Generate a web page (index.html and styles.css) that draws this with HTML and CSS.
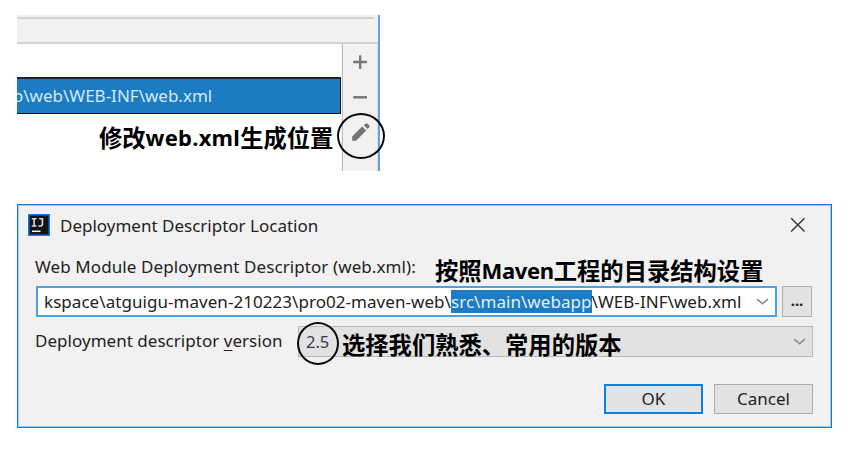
FILE: index.html
```html
<!DOCTYPE html>
<html lang="zh-CN">
<head>
<meta charset="utf-8">
<title>Deployment Descriptor Location</title>
<link rel="stylesheet" href="styles.css">
</head>
<body>
<section class="panel">
  <div class="panel-head"></div>
  <div class="panel-body">
    <div class="list">
      <div class="row"><span class="t-row">o\web\WEB-INF\web.xml</span></div>
    </div>
    <div class="tools">
      <svg class="tool plus" width="16" height="16" viewBox="0 0 16 16"><path d="M1.2 8H15M8.2 1.3V15" stroke="#777" stroke-width="2.3"/></svg>
      <svg class="tool minus" width="16" height="16" viewBox="0 0 16 16"><path d="M1.2 8.3H15" stroke="#777" stroke-width="2.5"/></svg>
      <svg class="tool pencil" width="20" height="20" viewBox="0 0 20 20"><path d="M1.2 18.8V14.4L11.2 4.5L15.2 8.5L5.1 18.8ZM12.8 3.2L14.4 1.7Q15.5 .8 16.6 1.7L18.2 3.2Q19 4.3 18.2 5.4L16.6 7Z" fill="#737373"/></svg>
    </div>
  </div>
  <div class="note note-a"><span>修改</span><span class="lat">web.xml</span><span>生成位置</span></div>
  <div class="ring ring-a"></div>
</section>
<section class="dialog">
  <header class="title">
    <svg class="logo" width="22" height="22" viewBox="0 0 22 22"><rect width="22" height="22" fill="#087cfa"/><rect x="1.5" y="1.5" width="19" height="19" fill="#111318"/><path d="M3.7 4.7H8.5M6.1 4.7V12M3.7 12H8.5M11.2 4.7H14.4V10Q14.4 12 12.4 12H10.4" fill="none" stroke="#ddd" stroke-width="1.6"/><path d="M4 17.3H12.5" stroke="#fff" stroke-width="1.5"/></svg>
    <span class="t-title">Deployment Descriptor Location</span>
    <svg class="close" width="16" height="16" viewBox="0 0 16 16"><path d="M1.2 1.2L14.5 14.5M14.5 1.2L1.2 14.5" stroke="#333" stroke-width="1.4"/></svg>
  </header>
  <div class="label"><span class="t-label">Web Module Deployment Descriptor (web.xml):</span></div>
  <div class="field-row">
    <div class="field">
      <span class="path"><span class="t-p1">kspace\atguigu-maven-210223\pro02-maven-web\</span><span class="sel">src\main\webapp</span><span class="t-p3">\WEB-INF\web.xml</span></span>
      <svg class="chev" width="13" height="8" viewBox="0 0 13 8"><path d="M1 1.2L6.5 5.7L12 1.2" fill="none" stroke="#8b8b8b" stroke-width="1.6"/></svg>
    </div>
    <div class="more">...</div>
  </div>
  <div class="version-row">
    <span class="version-label"><span class="t-ver">Deployment descriptor <u>v</u>ersion</span></span>
    <div class="combo"><span class="t-num">2.5</span>
      <svg class="chev" width="13" height="8" viewBox="0 0 13 8"><path d="M1 1.2L6.5 5.7L12 1.2" fill="none" stroke="#8b8b8b" stroke-width="1.6"/></svg>
    </div>
  </div>
  <footer class="actions">
    <div class="btn ok">OK</div>
    <div class="btn cancel">Cancel</div>
  </footer>
  <div class="note note-b"><span>按照</span><span class="lat maven">Maven</span><span>工程的目录结构设置</span></div>
  <div class="note note-c"><span>选择我们熟悉、常用的版本</span></div>
  <div class="ring ring-b"></div>
</section>
</body>
</html>
```
FILE: styles.css
```css
* { box-sizing: border-box; }
body { margin: 0; padding: 15px 0 0 17px; width: 863px; height: 451px; overflow: hidden; background: #fff; color: #222; font: 17px/24px "Noto Sans", sans-serif; white-space: nowrap; }
svg { display: block; flex: none; }
.panel { position: relative; width: 363px; height: 156px; display: flex; flex-direction: column; background: #f1f1f1; border-right: 2px solid #5ba5e1; }
.panel-head { height: 29px; padding-top: 2px; border-bottom: 2px solid #d2d2d2; }
.panel-head::before { content: ""; display: block; width: 357px; height: 2px; background: #d3d3d3; }
.panel-body { flex: 1; display: flex; }
.list { width: 325px; background: #fff; padding-top: 33px; }
.row { height: 37px; border: 1px solid #111; border-top: 2px solid #222; border-left: 0; background: #1b7bc3; color: #d7e9f7; overflow: hidden; line-height: 33px; }
.t-row { margin-left: -4px; }
.tools { width: 36px; border-left: 1px solid #bcbcbc; border-right: 1px solid #ddd; margin-left: 1px; padding-top: 10px; }
.tool { margin-left: 9px; }
.minus { margin-top: 19px; }
.pencil { margin: 17px 0 0 8px; }
.dialog { position: relative; width: 815px; height: 224px; margin-top: 33px; padding: 0 17px; background: #f1f1f1; border: 1px solid #1777c8; box-shadow: inset 0 0 0 1px #9fcdf0; }
.title { display: flex; align-items: center; height: 40px; margin-left: -7px; }
.t-title { margin-left: 10px; padding-top: 1px; }
.close { margin: 0 8px 0 auto; }
.label { height: 41px; line-height: 43px; letter-spacing: .09px; }
.field-row { display: flex; gap: 5px; padding-left: 1px; }
.field { width: 741px; height: 31px; display: flex; align-items: center; justify-content: space-between; background: #fff; border: 2px solid #4aa3e8; padding: 0 6px 0 5px; }
.path { display: flex; line-height: 23px; letter-spacing: .05px; margin: -1px 0 0 1px; }
.sel { background: #1b7bc3; color: #e3f0fa; }
.more { width: 30px; height: 31px; border: 1px solid #b0b0b0; background: #e2e2e2; text-align: center; line-height: 26px; font-weight: 700; font-size: 15px; }
.version-row { display: flex; justify-content: space-between; margin-top: 9px; height: 31px; }
.version-label { line-height: 29px; letter-spacing: .03px; }
.version-label u { text-decoration-thickness: 1px; text-underline-offset: 3px; }
.combo { width: 515px; border: 1px solid #b9b9b9; background: #e2e2e2; display: flex; align-items: center; justify-content: space-between; padding: 0 6px 0 7px; }
.t-num { color: #33394d; font-size: 16.5px; }
.actions { display: flex; justify-content: flex-end; gap: 11px; margin-top: 27px; }
.btn { width: 99px; height: 30px; border: 1px solid #adadad; background: #e2e2e2; text-align: center; line-height: 27px; }
.ok { border: 2px solid #0b83dc; line-height: 25px; }
.field-row, .version-row, .actions { width: 778px; }
.note { position: absolute; display: flex; height: 30px; color: #000; font: 700 23.3px/30px "Noto Sans CJK SC", sans-serif; }
.lat { font-family: "Noto Sans", sans-serif; font-size: 22px; letter-spacing: .25px; }
.maven { letter-spacing: -.35px; }
.note-a { left: 82px; top: 107px; }
.note-b { left: 417px; top: 50px; }
.note-c { left: 324px; top: 124px; }
.ring { position: absolute; border: 2px solid #0a0a0a; border-radius: 50%; }
.ring-a { left: 320px; top: 98px; width: 48px; height: 46px; }
.ring-b { left: 279px; top: 117px; width: 42px; height: 43px; }
```
